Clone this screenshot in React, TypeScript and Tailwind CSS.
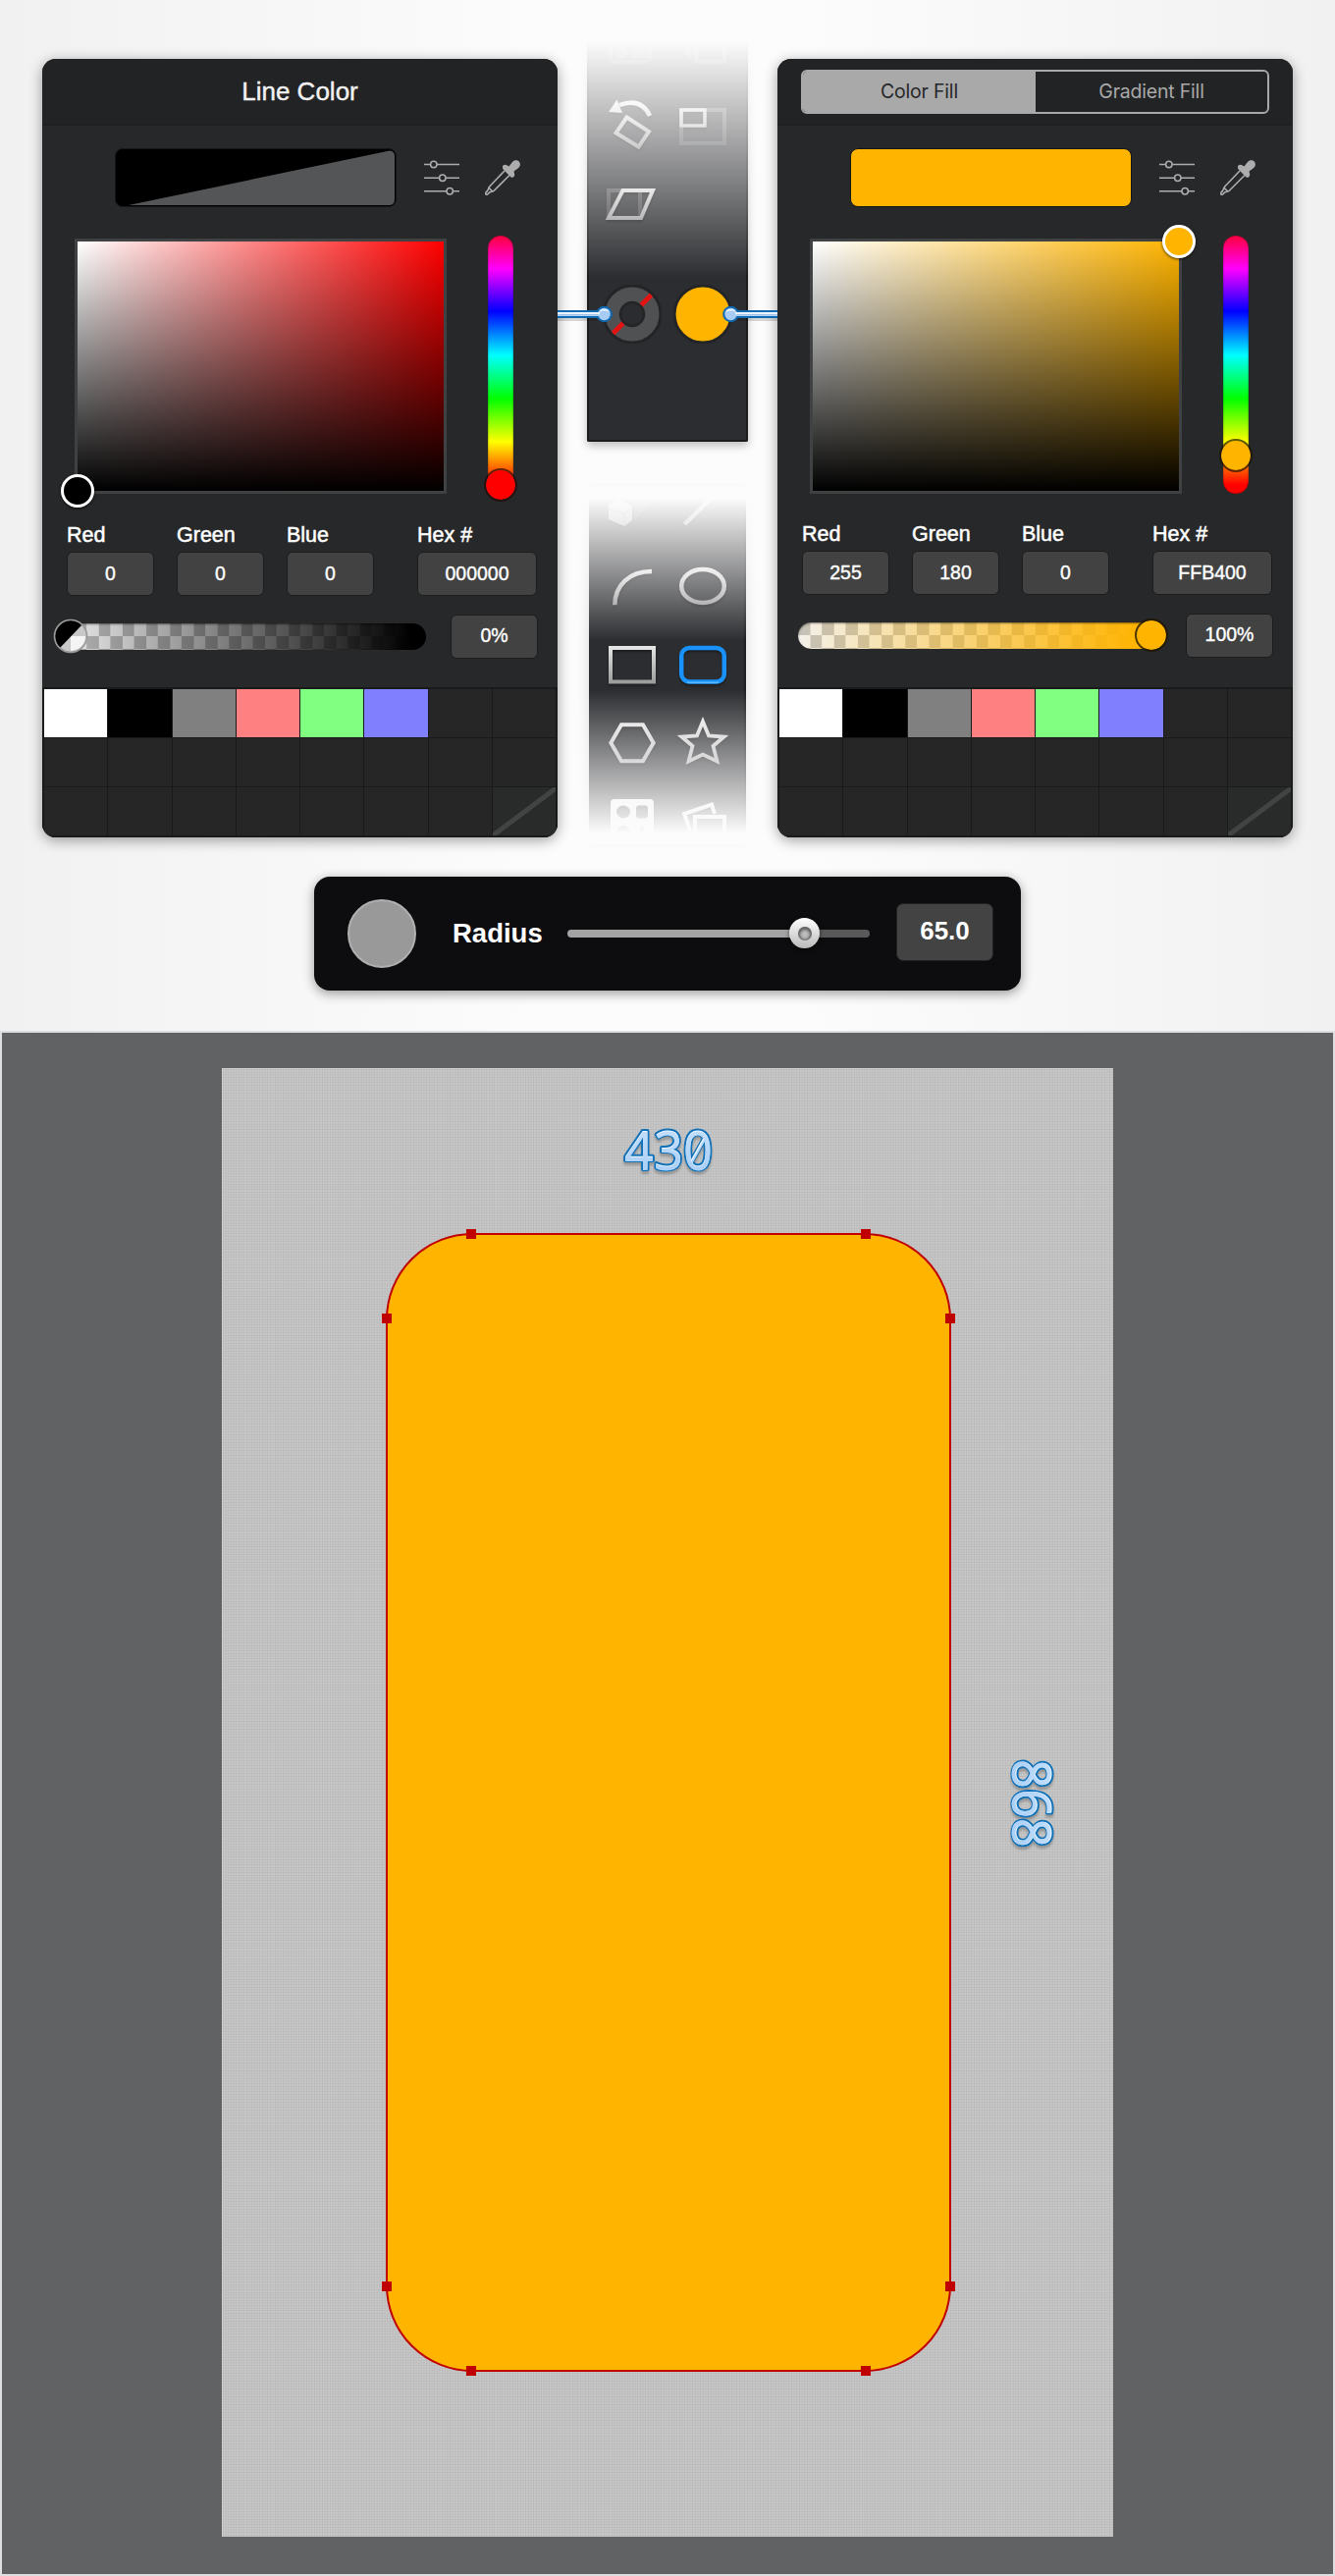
import React from "react";

const SWATCHES = ["#ffffff", "#000000", "#808080", "#ff8080", "#80ff80", "#8080ff"];

const MetalDefs = () => (
  <svg width="0" height="0" className="absolute">
    <defs>
      <linearGradient id="metal" gradientUnits="userSpaceOnUse" x1="0" y1="16" x2="0" y2="64">
        <stop offset="0" stopColor="#f0f0f0" />
        <stop offset="1" stopColor="#8e8e90" />
      </linearGradient>
      <linearGradient id="metalSoft" gradientUnits="userSpaceOnUse" x1="0" y1="16" x2="0" y2="64">
        <stop offset="0" stopColor="#e9e9ea" />
        <stop offset="1" stopColor="#b0b0b2" />
      </linearGradient>
      <linearGradient id="ice" x1="0" y1="0" x2="0" y2="1">
        <stop offset="0.2" stopColor="#c3defb" />
        <stop offset="1" stopColor="#a3cbf6" />
      </linearGradient>
    </defs>
  </svg>
);

function Icon({ children, faint }: { children?: React.ReactNode; faint?: boolean }) {
  return (
    <svg
      width="72"
      height="80"
      viewBox="0 0 72 80"
      fill="none"
      stroke="url(#metal)"
      strokeWidth="4"
      className={faint ? "block opacity-40" : "block drop-shadow-[0_2px_1px_rgba(0,0,0,0.35)]"}
    >
      {children}
    </svg>
  );
}

function SlidersIcon() {
  return (
    <svg width="36" height="36" viewBox="0 0 36 36" fill="none" stroke="#adadae" strokeWidth="1.5" className="shrink-0">
      <path d="M0 4.5H6.5M13 4.5H36M0 18.2H15.5M22 18.2H36M0 31.8H23M29.5 31.8H36" />
      <circle cx="9.8" cy="4.5" r="3.2" />
      <circle cx="18.8" cy="18.2" r="3.2" />
      <circle cx="26.2" cy="31.8" r="3.2" />
    </svg>
  );
}

function DropperIcon() {
  return (
    <svg width="36" height="36" viewBox="0 0 36 36" fill="none" className="shrink-0">
      <path
        d="M18.5 5.5C20 4.2 21.5 4.5 22.7 5.5L24.5 6.5L28 2C30 -0.3 33 -0.2 34.8 1.6C36.4 3.5 36.3 6 34.3 7.9L29.5 11.5L30.2 14.5C30.5 16.5 28.5 18.5 26.5 17.5L18.8 9.8C17.8 8.5 17.5 6.8 18.5 5.5Z"
        fill="#adadae"
      />
      <path
        d="M20 11L4.5 27.2C3.2 28.5 4 30 2.5 31.5C0.5 33 0.2 34.5 1.5 35.3C2.7 35.8 3.5 33.5 5 32.8C6.5 32 8 32.5 9 31.5L25 15.5M4.2 28.5L8 32.3"
        stroke="#adadae"
        strokeWidth="1.6"
      />
    </svg>
  );
}

function Field({ label, value, wide }: { label: string; value: string; wide?: boolean }) {
  return (
    <div className={wide ? "w-[122px]" : "w-[89px]"}>
      <div className="flex h-8 items-center text-[21.5px] leading-none text-white [-webkit-text-stroke:0.5px_white]">{label}</div>
      <ValueBox value={value} />
    </div>
  );
}

function ValueBox({ value }: { value: string }) {
  return (
    <div className="flex h-[45px] items-center justify-center rounded-[6px] border border-[#1b1c1d] bg-[#424242] text-[19.5px] leading-none text-white [-webkit-text-stroke:0.4px_white]">
      {value}
    </div>
  );
}

function ColorPanel({
  header,
  right,
  values,
  alpha,
}: {
  header: React.ReactNode;
  right?: boolean;
  values: string[];
  alpha: string;
}) {
  return (
    <section className="flex h-[793px] w-[525px] shrink-0 flex-col overflow-hidden rounded-[14px] bg-[#27282a] shadow-[0_3px_14px_rgba(0,0,0,0.38)]">
      <header className="flex h-[68px] shrink-0 items-center justify-center border-b-2 border-[#1f2021] bg-[#222325]">{header}</header>

      <div className="mt-[23px] ml-[74px] flex h-[60px] items-center">
        {right ? (
          <div className="h-[60px] w-[287px] rounded-[8px] border border-[#151617] bg-[#ffb400]" />
        ) : (
          <div className="h-[60px] w-[287px] overflow-hidden rounded-[8px] border border-[#151617] bg-black">
            <svg width="285" height="58" className="block">
              <path d="M13 57L279 1.5Q284 2 284 7V51Q284 57 278 57Z" fill="#545557" />
            </svg>
          </div>
        )}
        <div className="ml-[28px] flex gap-[26px]">
          <SlidersIcon />
          <DropperIcon />
        </div>
      </div>

      <div className="mt-[29px] ml-[33px] flex">
        <div
          className={
            right
              ? "relative mt-[3px] h-[260px] w-[379px] border-3 border-[#404142] bg-[linear-gradient(to_top,#000,transparent),linear-gradient(to_right,#fff,#ffb400)]"
              : "relative mt-[3px] h-[260px] w-[379px] border-3 border-[#404142] bg-[linear-gradient(to_top,#000,transparent),linear-gradient(to_right,#fff,#f00)]"
          }
        >
          <span
            className={
              right
                ? "absolute -top-[17px] -right-[17px] size-[34px] rounded-full border-3 border-white bg-[#ffb400] shadow-[0_1px_3px_rgba(0,0,0,0.7)]"
                : "absolute -bottom-[17px] -left-[17px] size-[34px] rounded-full border-3 border-white bg-black shadow-[0_1px_3px_rgba(0,0,0,0.7)]"
            }
          />
        </div>
        <div className="relative ml-[42px] h-[263px] w-[26px] rounded-full bg-[linear-gradient(to_bottom,#ff0048_2px,#f0f_34px,#00f_77px,#0ff_122px,#0f0_166px,#ff0_210px,#f00_254px)] shadow-[inset_0_0_2px_rgba(0,0,0,0.6)]">
          <span
            className={
              right
                ? "absolute top-[207px] -left-[4px] size-[34px] rounded-full border-2 border-[#1d1400]/70 bg-[#ffb400] bg-clip-padding"
                : "absolute top-[237px] -left-[4px] size-[34px] rounded-full border-2 border-[#200a0a]/70 bg-[#ff0000] bg-clip-padding"
            }
          />
        </div>
      </div>

      <div className={right ? "mt-[26px] ml-[25px] flex gap-[23px]" : "mt-[27px] ml-[25px] flex gap-[23px]"}>
        <Field label="Red" value={values[0]} />
        <Field label="Green" value={values[1]} />
        <Field label="Blue" value={values[2]} />
        <div className="ml-[21px]">
          <Field label="Hex #" value={values[3]} wide />
        </div>
      </div>

      <div className="mt-[18px] ml-[21px] flex h-[46px] items-center">
        <div className="w-[370px] shrink-0">
          <div
            className={
              right
                ? "relative h-[27px] w-[364px] rounded-full bg-[linear-gradient(to_right,rgba(255,180,0,0),#ffb400_96%),conic-gradient(#f4f1ea_25%,#c6c2ba_0_50%,#f4f1ea_0_75%,#c6c2ba_0)] bg-[size:100%_100%,24.2px_26px] shadow-[inset_0_1px_2px_rgba(0,0,0,0.5)]"
                : "relative h-[27px] w-[370px] rounded-full bg-[linear-gradient(to_right,rgba(0,0,0,0),#000_96%),conic-gradient(#b4b4b4_25%,#ebebeb_0_50%,#b4b4b4_0_75%,#ebebeb_0)] bg-[size:100%_100%,24.2px_26px] shadow-[inset_0_1px_2px_rgba(0,0,0,0.5)]"
            }
          >
            {right ? (
              <span className="absolute -top-[4px] left-[343px] size-[34px] rounded-full border-2 border-[#201600]/80 bg-[#ffb400] bg-clip-padding" />
            ) : (
              <svg width="36" height="36" viewBox="0 0 36 36" className="absolute -top-[4.5px] -left-[10px]">
                <circle cx="18" cy="18" r="16" fill="#c8c8c8" />
                <path d="M18 18H33A15 15 0 0 1 18 33Z" fill="#f4f4f4" />
                <path d="M7 30A16 16 0 0 1 29.5 6.5Z" fill="#000" />
                <circle cx="18" cy="18" r="16.5" fill="none" stroke="#9a9a9a" strokeWidth="1.6" />
              </svg>
            )}
          </div>
        </div>
        <div className="ml-[25px] w-[89px]">
          <ValueBox value={alpha} />
        </div>
      </div>

      <div className="mt-auto grid h-[153px] grid-cols-8 grid-rows-3 gap-px border-2 border-[#191a1a] bg-[#191a1a]">
        {Array.from({ length: 24 }, (_, i) =>
          i === 23 ? (
            <svg key={i} viewBox="0 0 64 49" preserveAspectRatio="none" className="size-full bg-[#292a2a]">
              <path d="M0 49L64 1" stroke="#424343" strokeWidth="5" />
            </svg>
          ) : (
            <div key={i} className="bg-[#262626]" style={{ backgroundColor: SWATCHES[i] }} />
          ),
        )}
      </div>
    </section>
  );
}

function TransformToolbar() {
  return (
    <div className="relative h-[410px] w-[164px] rounded-b-[2px] shadow-[0_4px_8px_rgba(0,0,0,0.25)]">
      <div className="h-full overflow-hidden rounded-b-[2px] border-2 border-t-0 border-[#1b1c1e] bg-[#2c2d30]">
        <div className="-mt-8 ml-2 grid auto-rows-[80px] grid-cols-[72px_72px]">
          <Icon faint>
            <rect x="14" y="18" width="40" height="37" rx="4" />
            <circle cx="25" cy="46" r="4" />
            <path d="M44 41L49 49H39Z" />
          </Icon>
          <Icon faint>
            <path d="M29 20H58V55H29ZM22 50L19 20" />
          </Icon>
          <Icon>
            <path d="M54 30C48 17 37 14 23 19" strokeWidth="4.5" />
            <path d="M12 26L20.5 13.5L26 27Z" fill="url(#metal)" stroke="none" />
            <path d="M30.5 31.5L53 46L42.5 61.5L19.5 47.5Z" />
          </Icon>
          <Icon>
            <rect x="14" y="24" width="44" height="34" opacity="0.3" />
            <rect x="14" y="24" width="24" height="16" strokeWidth="3.5" />
          </Icon>
          <Icon>
            <rect x="12" y="26" width="32" height="28" opacity="0.25" />
            <path d="M26.5 26H57L45 54H12Z" />
          </Icon>
        </div>
      </div>
      <div className="absolute inset-x-[-10px] -top-[6px] h-[249px] bg-[linear-gradient(to_bottom,#fcfcfc_8px,rgba(252,252,252,0))]" />
      <svg width="144" height="60" viewBox="0 0 144 60" className="absolute top-[250px] left-[10px]">
        <circle cx="36" cy="30" r="29" fill="#505153" stroke="#232426" strokeWidth="3" />
        <path d="M16.5 49.5L55.5 10.5" stroke="#e31313" strokeWidth="5" />
        <circle cx="36" cy="30" r="12" fill="#2b2c2f" stroke="#232426" strokeWidth="2.5" />
        <circle cx="108" cy="30" r="29" fill="#ffb400" stroke="#232426" strokeWidth="3" />
      </svg>
    </div>
  );
}

function ShapeToolbar() {
  return (
    <div className="relative mx-auto h-[350px] w-[160px] shadow-[0_0_12px_rgba(0,0,0,0.15)]">
      <div className="h-full overflow-hidden border-r-2 border-[#1f2022] bg-[#2c2d30]">
        <div className="-mt-6 ml-2 grid auto-rows-[79.3px] grid-cols-[72px_72px]">
          <Icon>
            <path d="M12 35L22 29L36 36V51L28 57L12 50Z" fill="url(#metal)" stroke="none" />
            <path d="M12 40L28 44L36 38M28 44V57" stroke="#8a8a8c" strokeWidth="1.5" />
            <path d="M38 52L60 30V24L50 22L36 32Z" fill="#44454a" stroke="none" />
          </Icon>
          <Icon>
            <path d="M17.5 55L47 26" strokeWidth="4.5" />
          </Icon>
          <Icon>
            <path d="M18.3 58.3C18.5 38 33 24 56 24" strokeWidth="4.5" />
          </Icon>
          <Icon>
            <ellipse cx="36" cy="39" rx="21.8" ry="17" strokeWidth="4.5" />
          </Icon>
          <Icon>
            <rect x="14" y="22" width="44" height="34.5" />
          </Icon>
          <Icon>
            <rect x="14.2" y="22" width="43.6" height="34.5" rx="8" stroke="#1993fb" strokeWidth="4.5" />
            <path d="M20 57.3H52" stroke="#5eb8ff" strokeWidth="1.5" />
          </Icon>
          <Icon>
            <path d="M14.3 39.7L25 21.3H47L57.7 39.7L47 58.3H25Z" stroke="url(#metalSoft)" />
          </Icon>
          <Icon>
            <path
              d="M36 18L42 32.5L57.5 33.5L46.5 43L50.5 58.5L36 51.5L21.5 58.5L25.5 43L14.5 33.5L30 32.5Z"
              stroke="url(#metalSoft)"
              strokeWidth="3.8"
            />
          </Icon>
          <Icon>
            <path
              fillRule="evenodd"
              fill="#f0f0f0"
              stroke="none"
              d="M18 18H54Q58 18 58 22V66H14V22Q14 18 18 18ZM27 24.5A7 6.5 0 1 0 27 37.5A7 6.5 0 1 0 27 24.5ZM43 24.5Q40 24.5 40 27.5V34.5Q40 37.5 43 37.5H49Q52 37.5 52 34.5V27.5Q52 24.5 49 24.5ZM27 45A7 6.5 0 1 0 27 58A7 6.5 0 1 0 27 45ZM46 45L39 58H53Z"
            />
          </Icon>
          <Icon>
            <path d="M25 56L17 33L45 23.5L48 33" stroke="#eeeeee" />
            <rect x="28" y="36" width="30" height="27" stroke="#eeeeee" />
          </Icon>
        </div>
      </div>
      <div className="absolute inset-x-[-12px] -top-[8px] h-[158px] bg-[linear-gradient(to_bottom,#fcfcfc_12px,rgba(252,252,252,0))]" />
      <div className="absolute inset-x-[-12px] -bottom-[8px] h-[158px] bg-[linear-gradient(to_top,#fcfcfc_12px,rgba(252,252,252,0))]" />
    </div>
  );
}

function Connector({ flip }: { flip?: boolean }) {
  return (
    <svg
      width="58"
      height="22"
      viewBox="0 0 58 22"
      className={flip ? "absolute top-[309px] left-[734px] -scale-x-100" : "absolute top-[309px] left-[568px]"}
    >
      <rect x="0" y="14" width="40" height="4" fill="#000" opacity="0.15" />
      <rect x="0" y="7" width="44" height="8" fill="#0f69b0" />
      <circle cx="47.5" cy="11" r="8.3" fill="#0f69b0" />
      <circle cx="47.5" cy="11" r="6.2" fill="#a9ccf5" />
      <path d="M42 9A6.2 6.2 0 0 1 53 9C50 7 45 7 42 9Z" fill="#eef6ff" />
      <rect x="0" y="9" width="43" height="2.2" fill="#eaf4fd" />
      <rect x="0" y="11.2" width="43" height="1.8" fill="#b5d3f3" />
    </svg>
  );
}

function DimensionLabel({ text, slashed }: { text: string; slashed?: boolean }) {
  return (
    <svg
      width="110"
      height="80"
      viewBox="0 0 110 80"
      className="block"
      style={{ fontFamily: '"Noto Sans", sans-serif' }}
      fontSize="54"
      strokeLinejoin="round"
    >
      <g fill="#1071b8" stroke="#1071b8" strokeWidth="4">
        <text x="10" y="59" textLength="90" lengthAdjust="spacingAndGlyphs">{text}</text>
        {slashed && <path d="M79 50L91 29" strokeWidth="5.5" />}
      </g>
      <g fill="#eef7ff">
        <text x="10" y="59" textLength="90" lengthAdjust="spacingAndGlyphs">{text}</text>
        {slashed && <path d="M78 52L92 27" stroke="#eef7ff" strokeWidth="2.6" />}
      </g>
      <g fill="url(#ice)">
        <text x="10" y="59.8" textLength="90" lengthAdjust="spacingAndGlyphs">{text}</text>
        {slashed && <path d="M79 52L92 29" stroke="#b4d6f9" strokeWidth="1.6" />}
      </g>
    </svg>
  );
}

const HANDLES = [
  "top-[-6px] left-[80px]",
  "top-[-6px] right-[80px]",
  "top-[80px] left-[-6px]",
  "top-[80px] right-[-6px]",
  "bottom-[80px] left-[-6px]",
  "bottom-[80px] right-[-6px]",
  "bottom-[-6px] left-[80px]",
  "bottom-[-6px] right-[80px]",
];

export default function App() {
  return (
    <main
      className="flex h-[2624px] w-[1360px] flex-col overflow-hidden bg-[#fcfcfc]"
      style={{ fontFamily: '"Liberation Sans", Arial, sans-serif' }}
    >
      <MetalDefs />
      <section className="relative flex h-[1050px] flex-col bg-[linear-gradient(to_right,#f1f1f1,#fcfcfc_40%,#fcfcfc_60%,#f1f1f1)]">
        <div className="flex gap-[30px] pt-[60px] pl-[43px]">
          <ColorPanel
            header={<h1 className="text-[26px] leading-none text-[#f2f2f2] [-webkit-text-stroke:0.4px_#f2f2f2]">Line Color</h1>}
            values={["0", "0", "0", "000000"]}
            alpha="0%"
          />
          <div className="-mt-5 flex h-[813px] w-[164px] shrink-0 flex-col justify-between">
            <TransformToolbar />
            <ShapeToolbar />
          </div>
          <ColorPanel
            right
            header={
              <div
                className="flex h-[45px] w-[477px] overflow-hidden rounded-[6px] border-2 border-[#a9a9a9] text-[19.5px] leading-none tracking-[-0.2px]"
                style={{ fontFamily: "Inter, sans-serif" }}
              >
                <div className="flex w-[237px] items-center justify-center bg-[#a9a9a9] pt-0.5 text-[#262729]">Color Fill</div>
                <div className="flex flex-1 items-center justify-center pt-0.5 text-[#a9a9a9]">Gradient Fill</div>
              </div>
            }
            values={["255", "180", "0", "FFB400"]}
            alpha="100%"
          />
        </div>
        <Connector />
        <Connector flip />

        <div className="mx-auto mt-[40px] flex h-[116px] w-[720px] items-center rounded-[16px] bg-[#0d0d0f] shadow-[0_3px_12px_rgba(0,0,0,0.4)]">
          <div className="ml-[34px] size-[70px] rounded-full border-2 border-[#b0b0b0] bg-[#999999]" />
          <span className="ml-[37px] w-[117px] text-[27.5px] leading-none font-bold text-white">Radius</span>
          <div className="relative h-2 w-[308px] rounded-full bg-[linear-gradient(to_right,#a3a3a3_240px,#59595a_240px)]">
            <span className="absolute top-[-12px] left-[226px] flex size-[31px] items-center justify-center rounded-full bg-gradient-to-b from-white to-[#bababa] shadow-[0_2px_4px_rgba(0,0,0,0.6)]">
              <span className="size-[14px] rounded-full bg-[#bdbdbd] shadow-[inset_0_1px_3px_2px_#5c5c5c]" />
            </span>
          </div>
          <div className="-mt-1 ml-[27px] flex h-[59px] w-[99px] items-center justify-center rounded-[7px] border border-[#222223] bg-[#434343] pb-0.5 text-[26px] leading-none font-bold text-white">
            65.0
          </div>
        </div>
      </section>

      <section className="flex h-[1574px] justify-center border-2 border-[#dddfe1] bg-[#616264] pt-[36px]">
        <div className="relative h-[1496px] w-[908px] border-t border-l border-[#d0d0d0] bg-[#c8c8c8] bg-[linear-gradient(to_right,rgba(0,0,0,0.05)_1px,transparent_1px),linear-gradient(to_bottom,rgba(0,0,0,0.05)_1px,transparent_1px)] bg-[size:2.6706px_2.6706px]">
          <div className="flex justify-center pt-[43px] drop-shadow-[0_3px_1px_rgba(0,0,0,0.22)]">
            <DimensionLabel text="430" slashed />
          </div>
          <div className="relative mx-auto mt-[44px] h-[1160px] w-[576px] rounded-[88px] border-2 border-[#c00000] bg-[#ffb400]">
            {HANDLES.map((pos) => (
              <span key={pos} className={`absolute size-[10px] bg-[#c00000] ${pos}`} />
            ))}
          </div>
          <div className="absolute top-[708px] left-[769px] drop-shadow-[0_3px_1px_rgba(0,0,0,0.22)]">
            <div className="rotate-90">
              <DimensionLabel text="868" />
            </div>
          </div>
        </div>
      </section>
    </main>
  );
}
